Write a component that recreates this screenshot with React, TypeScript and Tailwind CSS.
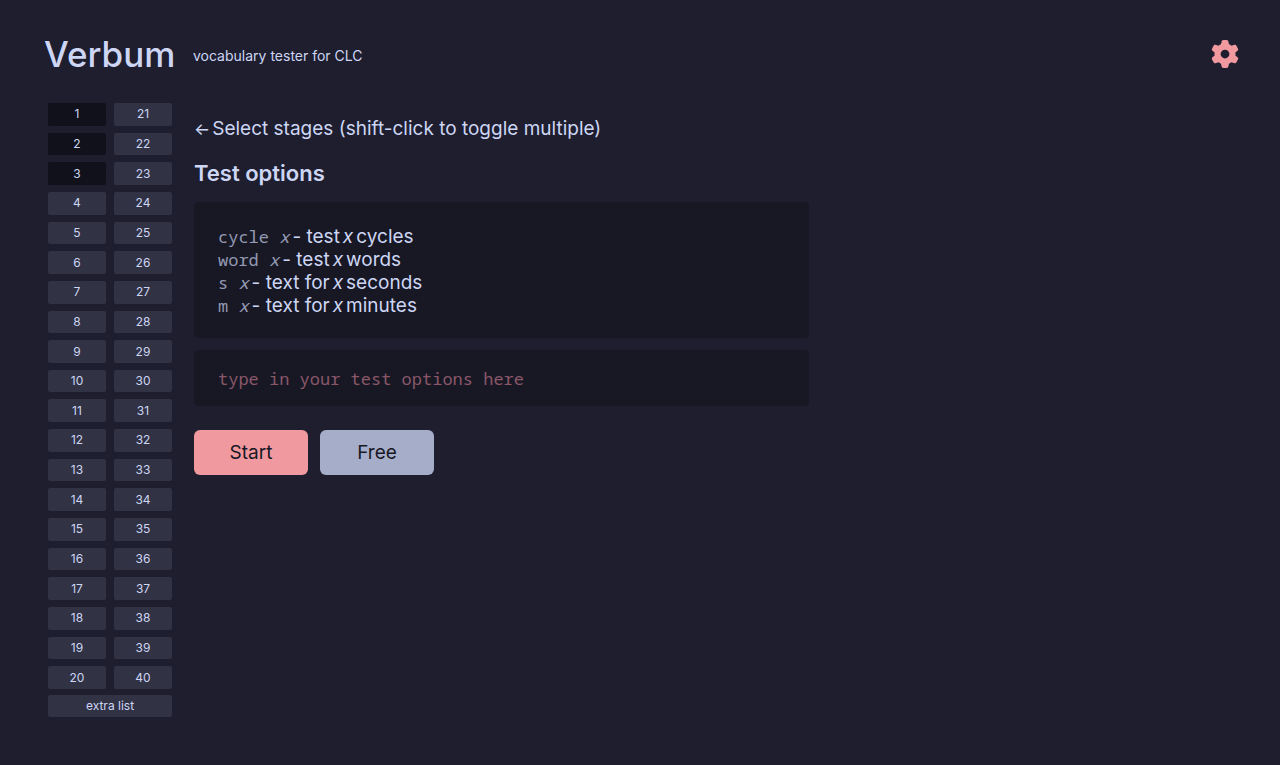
import { useState } from "react";
import { FaGear } from "react-icons/fa6";

const STAGE_COUNT = 40;

const options = [
    { command: "cycle", verb: "test", unit: "cycles" },
    { command: "word", verb: "test", unit: "words" },
    { command: "s", verb: "text for", unit: "seconds" },
    { command: "m", verb: "text for", unit: "minutes" },
];

export default function App() {
    const [selected, setSelected] = useState<number[]>([1, 2, 3]);
    const [last, setLast] = useState(3);

    const toggle = (stage: number, shift: boolean) => {
        const from = shift ? Math.min(last, stage) : stage;
        const to = shift ? Math.max(last, stage) : stage;
        const add = !selected.includes(stage);
        const rest = selected.filter((s) => s < from || s > to);
        const range = Array.from({ length: to - from + 1 }, (_, i) => from + i);
        setSelected(add ? [...rest, ...range] : rest);
        setLast(stage);
    };

    return (
        <div className="min-h-screen bg-[#1e1e2e] text-[#cdd6f4] font-['Inter',sans-serif] pt-8 pb-12">
            <Header />
            <div className="flex gap-[22px] pl-12 pr-10 mt-[27px]">
                <StageList selected={selected} onToggle={toggle} />
                <TestOptions />
            </div>
        </div>
    );
}

function Header() {
    return (
        <header className="flex items-center pl-11 pr-[41px] h-11">
            <h1 className="text-[35px] leading-11 font-medium w-[149px] shrink-0">Verbum</h1>
            <p className="text-sm pt-1">vocabulary tester for CLC</p>
            <button aria-label="Settings" className="ml-auto text-[#f0999f] cursor-pointer">
                <FaGear size={28} />
            </button>
        </header>
    );
}

function StageList({ selected, onToggle }: StageListProps) {
    const stages = Array.from({ length: STAGE_COUNT }, (_, i) => i + 1);
    return (
        <nav className="w-[124px] shrink-0 text-xs">
            <div className="grid grid-flow-col grid-cols-2 grid-rows-20 gap-x-2 gap-y-[7px] h-[586px]">
                {stages.map((stage) => (
                    <button
                        key={stage}
                        aria-pressed={selected.includes(stage)}
                        onClick={(e) => onToggle(stage, e.shiftKey)}
                        className={`rounded-xs cursor-pointer ${selected.includes(stage) ? "bg-[#11111b]" : "bg-[#313244]"}`}
                    >
                        {stage}
                    </button>
                ))}
            </div>
            <button className="w-full h-[22px] mt-1.5 rounded-xs bg-[#313244] cursor-pointer">extra list</button>
        </nav>
    );
}

function TestOptions() {
    return (
        <main className="flex-1 max-w-[615px] pt-3">
            <p className="flex gap-0.5 text-[19px] leading-7">
                <span className="text-[17px]">←</span>
                <span>Select stages (shift-click to toggle multiple)</span>
            </p>
            <h2 className="text-[22px] leading-7 font-semibold mt-4">Test options</h2>
            <ul className="mt-[15px] px-6 pt-[23px] pb-[21px] bg-[#181825] rounded-sm text-[19px] leading-[23px]">
                {options.map(({ command, verb, unit }) => (
                    <li key={command} className="flex items-baseline gap-[3px]">
                        <code className="font-['Noto_Sans_Mono','DejaVu_Sans_Mono',monospace] text-[17px] leading-4 text-[#9399b2]">
                            {command} <i>x</i>
                        </code>
                        <span>- {verb}</span>
                        <i>x</i>
                        <span>{unit}</span>
                    </li>
                ))}
            </ul>
            <input
                type="text"
                aria-label="Test options"
                placeholder="type in your test options here"
                className="block w-full h-14 mt-3 px-6 bg-[#181825] rounded-sm outline-none font-['Noto_Sans_Mono','DejaVu_Sans_Mono',monospace] text-[17px] placeholder:text-[#895768]"
            />
            <div className="flex gap-3 mt-6 text-[19px] text-[#181825]">
                <button className="w-[114px] h-[45px] pt-0.5 rounded-md bg-[#f0999f] cursor-pointer">Start</button>
                <button className="w-[114px] h-[45px] pt-0.5 rounded-md bg-[#a6adc8] cursor-pointer">Free</button>
            </div>
        </main>
    );
}

type StageListProps = {
    selected: number[];
    onToggle: (stage: number, shift: boolean) => void;
};
